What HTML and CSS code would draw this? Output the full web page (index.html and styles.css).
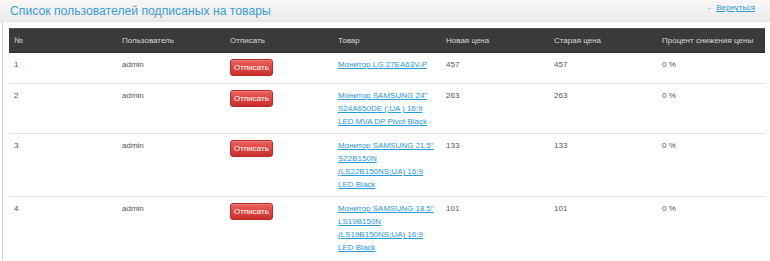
FILE: index.html
```html
<!DOCTYPE html>
<html lang="ru">
<head>
<meta charset="utf-8">
<link rel="stylesheet" href="styles.css">
</head>
<body>
<div class="topbar">
  <h1 class="title">Список пользователей подписаных на товары</h1>
  <span class="back"><span class="arrow">←</span> <a href="#">Вернуться</a></span>
</div>
<div class="panel">
  <table class="subs">
    <thead>
      <tr>
        <th>№</th>
        <th>Пользователь</th>
        <th>Отписать</th>
        <th>Товар</th>
        <th>Новая цена</th>
        <th>Старая цена</th>
        <th>Процент снижения цены</th>
      </tr>
    </thead>
    <tbody>
      <tr>
        <td>1</td>
        <td>admin</td>
        <td><button class="btn-danger">Отписать</button></td>
        <td><a href="#">Монитор LG 27EA63V-P</a></td>
        <td>457</td>
        <td>457</td>
        <td>0 %</td>
      </tr>
      <tr>
        <td>2</td>
        <td>admin</td>
        <td><button class="btn-danger">Отписать</button></td>
        <td><a href="#">Монитор SAMSUNG 24" S24A650DE (;UA ) 16:9 LED MVA DP Pivot Black</a></td>
        <td>263</td>
        <td>263</td>
        <td>0 %</td>
      </tr>
      <tr>
        <td>3</td>
        <td>admin</td>
        <td><button class="btn-danger">Отписать</button></td>
        <td><a href="#">Монитор SAMSUNG 21.5" S22B150N (LS22B150NS;UA) 16:9 LED Black</a></td>
        <td>133</td>
        <td>133</td>
        <td>0 %</td>
      </tr>
      <tr>
        <td>4</td>
        <td>admin</td>
        <td><button class="btn-danger">Отписать</button></td>
        <td><a href="#">Монитор SAMSUNG 18.5" LS19B150N (LS19B150NS;UA) 16:9 LED Black</a></td>
        <td>101</td>
        <td>101</td>
        <td>0 %</td>
      </tr>
    </tbody>
  </table>
</div>
</body>
</html>
```
FILE: styles.css
```css
html, body {
  margin: 0;
  padding: 0;
  background: #ffffff;
  font-family: "Liberation Sans", Arial, sans-serif;
  color: #333333;
}

.topbar {
  height: 22px;
  box-sizing: border-box;
  display: flex;
  align-items: center;
  justify-content: space-between;
  padding: 0 15px 0 10px;
  background: linear-gradient(#f8f8f8, #ececec);
  border-bottom: 1px solid #e2e2e2;
}

.title {
  margin: 0;
  font-size: 12.2px;
  font-weight: normal;
  color: #3d9bd3;
  line-height: 20px;
}

.back {
  font-size: 8px;
  color: #6aaee0;
  margin-top: -6px;
}

.back a {
  color: #2e97d6;
  text-decoration: underline;
}

.panel {
  margin-left: 2px;
  border-left: 1px solid #d6d6d6;
  padding: 6px 0 0 6px;
  min-height: 300px;
}

.subs {
  border-collapse: collapse;
  table-layout: fixed;
  width: 756px;
  font-size: 8px;
  line-height: 13px;
}

.subs th {
  background: #3a3a3a;
  color: #d8d8d8;
  font-weight: normal;
  text-align: left;
  height: 24px;
  padding: 0 5px;
  box-sizing: border-box;
  border-top: 1px solid #555;
  border-bottom: 1px solid #2c2c2c;
}

.subs td {
  padding: 5px 5px 5px;
  vertical-align: top;
  border-top: 1px solid #e2e2e2;
  color: #555;
}

.subs tbody tr:first-child td {
  border-top: none;
  padding-bottom: 7px;
}

.subs td a {
  color: #2b98d8;
  text-decoration: underline;
}

.btn-danger {
  display: inline-block;
  margin: 1px 0 0 0;
  height: 17px;
  padding: 0 3px;
  font-family: "Liberation Sans", Arial, sans-serif;
  font-size: 8px;
  line-height: 15px;
  color: #ffffff;
  background: linear-gradient(#ee5f5b, #c9302c);
  border: 1px solid #b52b27;
  border-radius: 3px;
  box-shadow: inset 0 1px 0 rgba(255,255,255,0.2);
}
```
